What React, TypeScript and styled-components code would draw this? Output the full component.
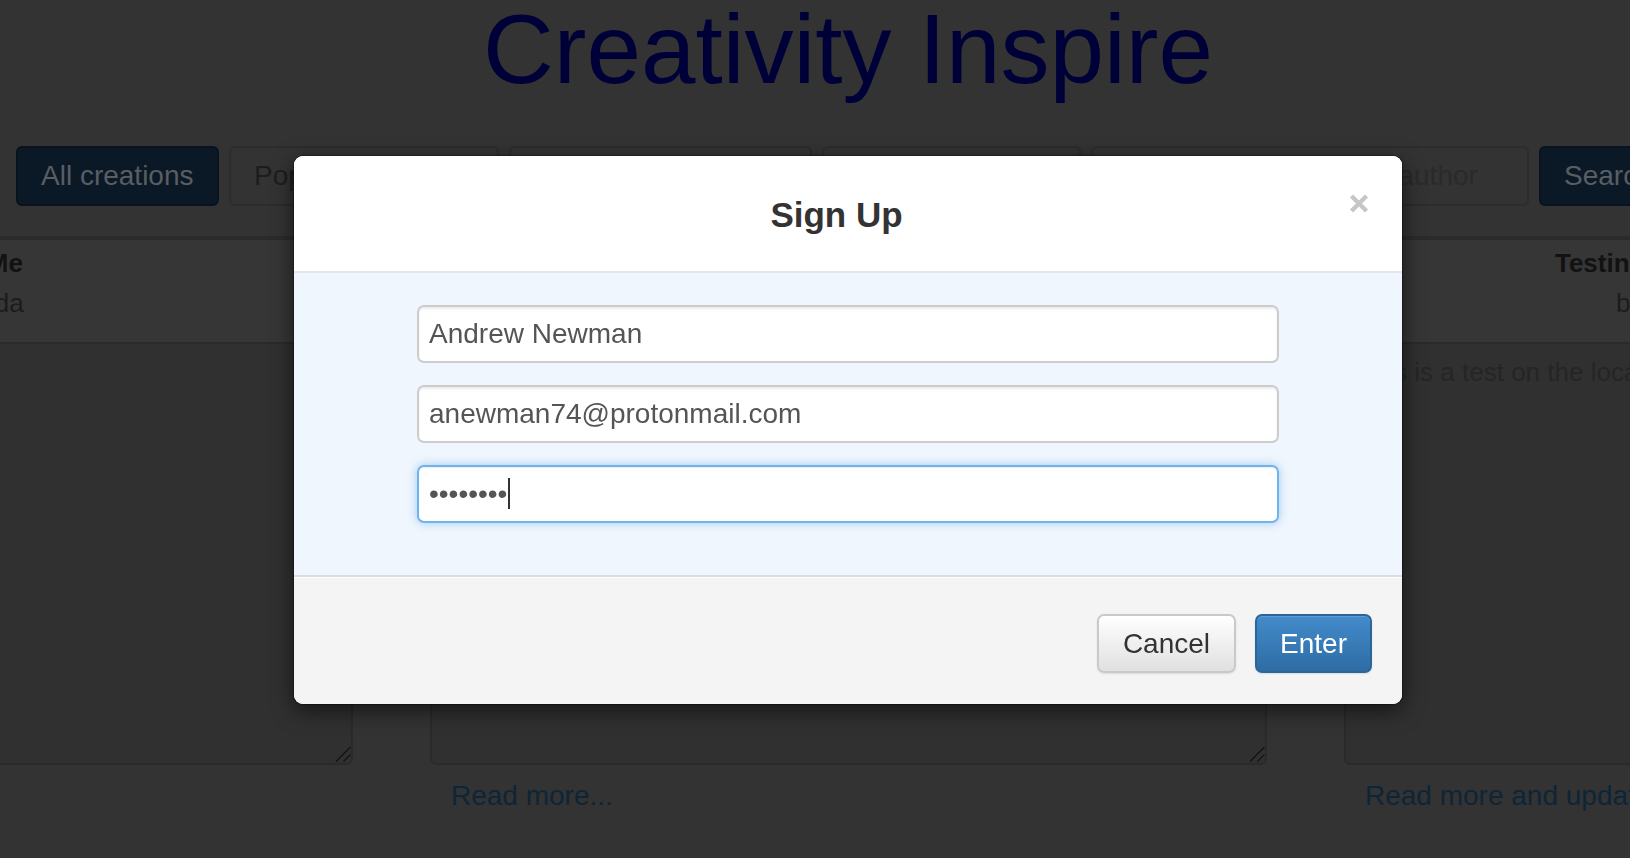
import React from "react";
import styled, { createGlobalStyle } from "styled-components";

const GlobalStyle = createGlobalStyle`
  html, body {
    margin: 0;
    padding: 0;
    background: #333333;
    overflow: hidden;
  }
  body {
    width: 1630px;
    height: 858px;
    font-family: "Liberation Sans", Arial, sans-serif;
  }
  *, *::before, *::after { box-sizing: border-box; }
`;

const FONT = `"Liberation Sans", Arial, Helvetica, sans-serif`;

/* ---------- page behind the dialog (already dimmed) ---------- */

const Page = styled.div`
  width: 1696px;
  height: 858px;
  background: #333333;
  overflow: hidden;
  font-family: ${FONT};
`;

const Title = styled.h1`
  margin: 0;
  height: 98px;
  font-size: 98px;
  line-height: 98px;
  font-weight: 400;
  text-align: center;
  color: #000038;
  white-space: nowrap;
`;

const Toolbar = styled.div`
  display: flex;
  gap: 10px;
  margin-top: 48px;
  padding: 0 16px;
  height: 60px;
`;

const ToolButton = styled.button<{ $w: number; $primary?: boolean }>`
  flex: none;
  width: ${(p) => p.$w}px;
  height: 60px;
  padding: 0 23px;
  border: 2px solid ${(p) => (p.$primary ? "#08131d" : "#2c2c2c")};
  border-radius: 6px;
  background: ${(p) => (p.$primary ? "#0b1926" : "#333333")};
  color: ${(p) => (p.$primary ? "#585e64" : "#1d1d1d")};
  font: 28px/1 ${FONT};
  text-align: left;
  white-space: nowrap;
  overflow: hidden;
`;

const SearchField = styled.input<{ $w: number }>`
  flex: none;
  width: ${(p) => p.$w}px;
  height: 60px;
  padding: 0 2px;
  border: 2px solid #2c2c2c;
  border-radius: 6px;
  background: #333333;
  font: 28px ${FONT};
  color: #2a2a2a;
  outline: none;
  &::placeholder { color: #2a2a2a; }
`;

const Board = styled.div`
  margin-top: 30px;
  display: flex;
  justify-content: center;
  width: 1696px;
`;

const Grid = styled.div`
  flex: none;
  width: 2742px;
  display: grid;
  grid-template-columns: repeat(3, 914px);
  border-top: 4px solid #2b2b2b;
`;

const HeadCell = styled.div`
  height: 102px;
  padding-top: 3px;
  background: #363636;
  text-align: center;
  white-space: nowrap;
  line-height: 40px;
  font-size: 26px;
`;

const HeadTitle = styled.div`
  font-weight: 700;
  color: #121212;
`;

const HeadAuthor = styled.div`
  color: #1c1c1c;
`;

const BodyCell = styled.div`
  padding: 0 38px 0 39px;
`;

const StoryBox = styled.div`
  position: relative;
  width: 837px;
`;

const Story = styled.textarea`
  display: block;
  width: 837px;
  height: 423px;
  margin: 0;
  padding: 10px 12px;
  border: 2px solid #2a2a2a;
  border-radius: 6px;
  background: #303030;
  color: #252525;
  font: 26px/37px ${FONT};
  resize: none;
  outline: none;
`;

const Grip = styled.svg`
  position: absolute;
  right: 2px;
  bottom: 3px;
  width: 16px;
  height: 16px;
  pointer-events: none;
`;

const ReadMore = styled.a`
  display: block;
  margin-top: 11px;
  padding-left: 21px;
  font-size: 28px;
  line-height: 40px;
  color: #0e2537;
  text-decoration: none;
  white-space: nowrap;
`;

/* ---------- dialog ---------- */

const Layer = styled.div`
  position: fixed;
  top: 0;
  left: 0;
  width: 1696px;
  height: 858px;
  display: flex;
  justify-content: center;
  align-items: flex-start;
  padding-top: 156px;
  font-family: ${FONT};
`;

const Dialog = styled.div`
  width: 1108px;
  background: #ffffff;
  border-radius: 9px;
  overflow: hidden;
  box-shadow: 0 6px 22px rgba(0, 0, 0, 0.6), 0 0 0 1px rgba(0, 0, 0, 0.3);
`;

const DialogHeader = styled.div`
  display: flex;
  align-items: flex-start;
  padding: 40px 33px 37px 30px;
  border-bottom: 2px solid #e6e6e6;
  background: #ffffff;
`;

const DialogTitle = styled.h4`
  flex: 1;
  margin: 0;
  text-align: center;
  font: 700 35px/38px ${FONT};
  color: #333333;
`;

const CloseButton = styled.button`
  flex: none;
  width: 20px;
  height: 21px;
  margin-top: -3px;
  padding: 0;
  border: 0;
  background: none;
  color: #c6c6c6;
  display: flex;
  cursor: pointer;
`;

const DialogBody = styled.div`
  display: flex;
  flex-direction: column;
  gap: 22px;
  padding: 32px 123px 52px;
  background: #eff6fd;
`;

const FieldWrap = styled.div`
  position: relative;
`;

const Field = styled.input<{ $focused?: boolean }>`
  display: block;
  width: 100%;
  height: 58px;
  padding: 0 10px;
  border: 2px solid ${(p) => (p.$focused ? "#70b4ea" : "#cccccc")};
  border-radius: 7px;
  background: #ffffff;
  font: 28px ${FONT};
  color: #555555;
  outline: none;
  box-shadow: ${(p) =>
    p.$focused
      ? "inset 0 1px 1px rgba(0,0,0,0.075), 0 0 10px rgba(102,175,233,0.6)"
      : "inset 0 2px 2px rgba(0,0,0,0.075)"};
`;

const Caret = styled.span`
  position: absolute;
  left: 91px;
  top: 13px;
  width: 2px;
  height: 31px;
  background: #333333;
`;

const DialogFooter = styled.div`
  display: flex;
  justify-content: flex-end;
  gap: 19px;
  padding: 37px 30px 31px;
  border-top: 2px solid #dcdcdc;
  background: #f4f4f4;
  box-shadow: inset 0 1px 0 #ffffff;
`;

const ActionButton = styled.button<{ $primary?: boolean }>`
  height: 59px;
  padding: 0 ${(p) => (p.$primary ? 23 : 24)}px;
  border: 2px solid ${(p) => (p.$primary ? "#2b669a" : "#c9c9c9")};
  border-radius: 7px;
  background: ${(p) =>
    p.$primary
      ? "linear-gradient(to bottom, #438bcb 0%, #2e6ca3 100%)"
      : "linear-gradient(to bottom, #ffffff 0%, #e0e0e0 100%)"};
  color: ${(p) => (p.$primary ? "#ffffff" : "#333333")};
  font: 28px/1 ${FONT};
  box-shadow: 0 1px 2px rgba(0, 0, 0, 0.1), inset 0 1px 0 rgba(255, 255, 255, 0.15);
  cursor: pointer;
`;

const stories = [
  {
    title: "Remember Me",
    author: "by Ana Almeida",
    text: "Something to remember.",
    link: "Read more...",
  },
  {
    title: "The Quiet Garden",
    author: "by Lucy Hart",
    text: "Once upon a time there was a garden that nobody visited.",
    link: "Read more...",
  },
  {
    title: "Testing the local storage function",
    author: "by Andrew Newman, Snr.",
    text: "This is a test on the local storage of the application.",
    link: "Read more and update...",
  },
];

export default function App() {
  return (
    <>
      <GlobalStyle />
      <Page>
        <Title>Creativity Inspire</Title>
        <Toolbar>
          <ToolButton $w={203} $primary>All creations</ToolButton>
          <ToolButton $w={270}>Popular works</ToolButton>
          <ToolButton $w={303}>Recent creations</ToolButton>
          <ToolButton $w={259}>My creations</ToolButton>
          <SearchField $w={438} placeholder="Search by name, title or author" readOnly />
          <ToolButton $w={142} $primary>Search</ToolButton>
        </Toolbar>
        <Board>
          <Grid>
            {stories.map((s) => (
              <HeadCell key={s.title + "h"}>
                <HeadTitle>{s.title}</HeadTitle>
                <HeadAuthor>{s.author}</HeadAuthor>
              </HeadCell>
            ))}
            {stories.map((s) => (
              <BodyCell key={s.title + "b"}>
                <StoryBox>
                  <Story readOnly value={s.text} />
                  <Grip viewBox="0 0 16 16">
                    <path
                      d="M1 15.5 L15.5 1 M8.5 15.5 L15.5 8.5"
                      stroke="#141414"
                      strokeWidth="1.4"
                      fill="none"
                    />
                  </Grip>
                </StoryBox>
                <ReadMore href="#">{s.link}</ReadMore>
              </BodyCell>
            ))}
          </Grid>
        </Board>
      </Page>

      <Layer>
        <Dialog role="dialog" aria-labelledby="signup-title">
          <DialogHeader>
            <DialogTitle id="signup-title">Sign Up</DialogTitle>
            <CloseButton aria-label="Close">
              <svg width="20" height="21" viewBox="0 0 20 21">
                <path
                  d="M2.5 3 L17.5 18 M17.5 3 L2.5 18"
                  stroke="currentColor"
                  strokeWidth="4.4"
                  strokeLinecap="butt"
                  fill="none"
                />
              </svg>
            </CloseButton>
          </DialogHeader>
          <DialogBody>
            <FieldWrap>
              <Field type="text" defaultValue="Andrew Newman" />
            </FieldWrap>
            <FieldWrap>
              <Field type="email" defaultValue="anewman74@protonmail.com" />
            </FieldWrap>
            <FieldWrap>
              <Field type="password" defaultValue="12345678" $focused />
              <Caret />
            </FieldWrap>
          </DialogBody>
          <DialogFooter>
            <ActionButton>Cancel</ActionButton>
            <ActionButton $primary>Enter</ActionButton>
          </DialogFooter>
        </Dialog>
      </Layer>
    </>
  );
}
